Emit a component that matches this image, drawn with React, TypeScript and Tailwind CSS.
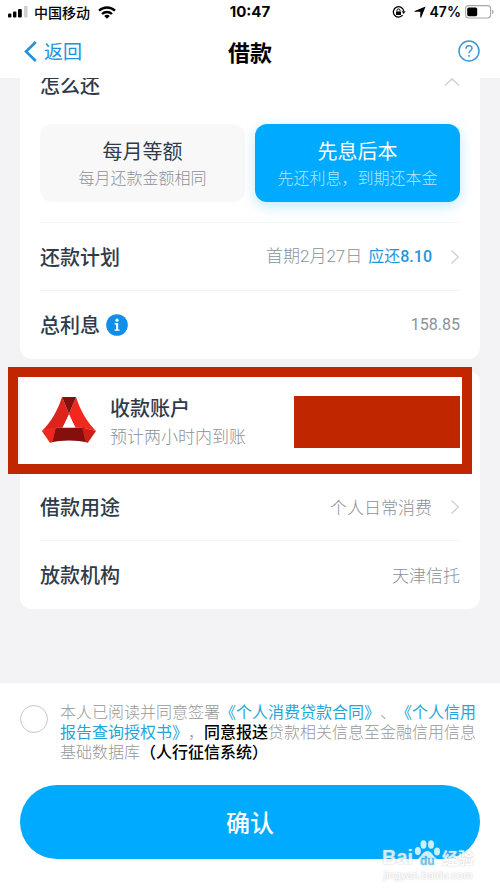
import React, { useState } from 'react';

interface Plan {
  key: string;
  title: string;
  desc: string;
}

interface RowProps {
  label: React.ReactNode;
  arrow?: boolean;
  line?: boolean;
  children: React.ReactNode;
}

const plans: Plan[] = [
  { key: 'equal', title: '每月等额', desc: '每月还款金额相同' },
  { key: 'interest', title: '先息后本', desc: '先还利息，到期还本金' },
];

const Chevron: React.FC<{ className?: string }> = ({ className }) => (
  <svg className={className} width="10" height="16" viewBox="0 0 10 16" fill="none" stroke="#d3d5d9" strokeWidth="1.6">
    <path d="M1.5 1.5 8.3 8l-6.8 6.5" />
  </svg>
);

const StatusBar: React.FC = () => (
  <div className="relative flex h-6 items-center justify-between pr-1.5 pl-2 text-black">
    <div className="flex items-center">
      <svg width="20" height="12" viewBox="0 0 20 12">
        <rect x="0" y="7.5" width="3.4" height="4" rx="1" />
        <rect x="5" y="5.5" width="3.4" height="6" rx="1" />
        <rect x="10" y="3" width="3.8" height="8.5" rx="1" />
        <rect x="16" y="0" width="3.6" height="11.5" rx="1" fill="#d0d0d0" />
      </svg>
      <span className="ml-1.5 text-sm font-medium">中国移动</span>
      <svg className="ml-2" width="18" height="13" viewBox="0 0 18 13" fill="none" stroke="#000" strokeWidth="2.3">
        <path d="M1 4.7a11.6 11.6 0 0 1 16 0" />
        <path d="M4 8a7.3 7.3 0 0 1 10 0" />
        <path d="M9 12.8 6.2 10a4 4 0 0 1 5.6 0z" fill="#000" stroke="none" />
      </svg>
    </div>
    <span className="absolute inset-x-0 text-center font-[Inter] text-[15px] font-bold">10:47</span>
    <div className="flex items-center">
      <svg width="14" height="12" viewBox="0 0 14 12" fill="none" stroke="#000" strokeWidth="1.3">
        <path d="M10.6 9.2A5.2 5.2 0 1 1 11.7 5" />
        <path d="M9.6 5.2h4l-2 2.8z" fill="#000" stroke="none" />
        <rect x="4" y="5.4" width="5" height="3.6" rx=".6" fill="#000" stroke="none" />
        <path d="M5 5.6V4.4a1.5 1.5 0 0 1 3 0v1.2" strokeWidth="1" />
      </svg>
      <svg className="ml-2" width="12" height="12" viewBox="0 0 12 12">
        <path d="M11.6.4 7.2 11.4c-.2.4-.9.3-.9-.1V5.7H.7C.3 5.7.2 5.2.6 5z" />
      </svg>
      <span className="ml-1 font-[Inter] text-sm font-semibold">47%</span>
      <svg className="ml-1" width="29" height="14" viewBox="0 0 29 14">
        <rect x=".6" y=".6" width="25" height="12.4" rx="3" fill="none" stroke="#a8a8a8" strokeWidth="1.1" />
        <rect x="2.2" y="2.4" width="10" height="8.8" rx="1.6" />
        <path d="M27 4.8v4.2c1-.3 1.5-1.1 1.5-2.1s-.5-1.8-1.5-2.1z" fill="#a8a8a8" />
      </svg>
    </div>
  </div>
);

const BankLogo: React.FC = () => (
  <svg className="mb-1 ml-0.5 shrink-0" width="54" height="46" viewBox="0 0 54 46">
    <path d="M20 0C16 13 9 25 0 34l14-3.5h7L27 17z" fill="#dc241b" />
    <path d="M34 0c4 13 11 25 20 34l-14-3.5h-7L27 17z" fill="#f2281e" />
    <path d="M20 0h14l-7 17z" fill="#850f0d" />
    <path d="M12 30.5h30l4 15c-12-2.8-26-2.8-38 0z" fill="#850f0d" />
    <path d="M0 34l13-3.5L9.5 45.2 8 45.500z" fill="#ee281e" />
    <path d="M0 34l13.500-3.500h.5L10.500 45 8 45.500z" fill="#ee281e" />
    <path d="M54 34l-13.500-3.500H40L43.500 45l2.500.5z" fill="#cc1f17" />
    <path d="M27 18l6.500 12.500h-13z" fill="#fff" />
  </svg>
);

const Row: React.FC<RowProps> = ({ label, arrow, line, children }) => (
  <div className={`flex h-[68px] items-center justify-between ${line ? 'border-b border-[#f3f5f7]' : ''}`}>
    <div className="flex items-center text-xl font-medium text-[#2f3b4a]">{label}</div>
    <div className="flex items-center text-[17px] font-light text-[#8c919a]">
      {children}
      {arrow && <Chevron className="ml-[18px]" />}
    </div>
  </div>
);

const Watermark: React.FC = () => (
  <div className="pointer-events-none absolute right-[26px] bottom-2 w-[92px] text-white opacity-80">
    <div className="flex items-end justify-between [text-shadow:0_0_2px_#b8b8b8]">
      <span className="font-['Liberation_Sans'] text-xl leading-6 font-bold">Bai</span>
      <svg width="27" height="30" viewBox="0 0 27 30" fill="#fff">
        <ellipse cx="3.8" cy="12" rx="3" ry="4" />
        <ellipse cx="9.5" cy="5.5" rx="3" ry="4.2" />
        <ellipse cx="17" cy="5.5" rx="3" ry="4.2" />
        <ellipse cx="23" cy="12.5" rx="3" ry="4" />
        <path d="M13.3 12c4 0 5 4 8 6.5 4 3.5 3 9.5-2 9.5-3 0-4-.6-6-.6s-3.500.6-6 .6c-5 0-6-6-2-9.500 3-2.500 4-6.500 8-6.500z" />
        <text x="13.3" y="25.5" textAnchor="middle" fontFamily="Liberation Sans" fontWeight="700" fontSize="12" fill="#45b8ee">du</text>
      </svg>
      <span className="text-base leading-6 font-bold">经验</span>
    </div>
    <div className="text-center font-['Liberation_Sans'] text-[11px] leading-3 [text-shadow:0_0_2px_#aaa]">jingyan.baidu.com</div>
  </div>
);

const App: React.FC = () => {
  const [plan, setPlan] = useState('interest');
  const [agreed, setAgreed] = useState(false);

  return (
    <div className="relative flex min-h-screen flex-col bg-[#f3f3f5] font-['Noto_Sans_CJK_SC',sans-serif] [text-spacing-trim:space-all]">
      <header className="bg-white">
        <StatusBar />
        <div className="relative flex h-[54px] items-center justify-between px-6">
          <button type="button" className="flex items-center text-[19px] text-[#2490dc]">
            <svg className="mr-[7px]" width="13" height="21" viewBox="0 0 13 21" fill="none" stroke="#2490dc" strokeWidth="2.6">
              <path d="M11.8 1 2 10.5l9.8 9.5" />
            </svg>
            返回
          </button>
          <h1 className="pointer-events-none absolute inset-x-0 text-center text-[22px] font-bold text-black">借款</h1>
          <button type="button" aria-label="帮助" className="-mr-1">
            <svg width="22" height="22" viewBox="0 0 22 22" fill="none" stroke="#3a98d6" strokeWidth="1.5">
              <circle cx="11" cy="11" r="10" />
              <path d="M8 8.7c0-4 6-4 6-.4 0 2.4-3 2.6-3 5" />
              <path d="M11 15v1.7" />
            </svg>
          </button>
        </div>
      </header>

      <main className="flex-1 overflow-hidden px-5">
        <section className="-mt-6 rounded-xl bg-white px-5">
          <div className="flex h-[62px] items-center justify-between">
            <h2 className="text-xl font-medium text-[#2f3b4a]">怎么还</h2>
            <svg className="mb-1.5" width="16" height="10" viewBox="0 0 16 10" fill="none" stroke="#d3d5d9" strokeWidth="1.6">
              <path d="M1 8.5 8 1.8l7 6.7" />
            </svg>
          </div>
          <div className="grid grid-cols-2 gap-2.5 border-b border-[#f3f5f7] pt-2 pb-5">
            {plans.map(item => (
              <button
                type="button"
                key={item.key}
                aria-pressed={plan === item.key}
                onClick={() => setPlan(item.key)}
                className={`flex h-[78px] flex-col items-center justify-center rounded-xl ${
                  plan === item.key
                    ? 'bg-[#00aaff] text-white shadow-[0_4px_14px_#00aaff40]'
                    : 'bg-[#f8f8f9] text-[#2f3b4a]'
                }`}
              >
                <span className="text-xl leading-7">{item.title}</span>
                <span className={`text-base leading-6 font-light ${plan === item.key ? 'text-[#b4e6ff]' : 'text-[#8c919a]'}`}>
                  {item.desc}
                </span>
              </button>
            ))}
          </div>
          <Row label="还款计划" arrow line>
            <span className="font-[Roboto,'Noto_Sans_CJK_SC',sans-serif]">首期2月27日</span>
            <span className="ml-1.5 font-[Roboto,'Noto_Sans_CJK_SC',sans-serif] text-base font-normal text-[#2196e0]">
              应还<span className="font-medium">8.10</span>
            </span>
          </Row>
          <Row
            label={
              <>
                总利息
                <svg className="ml-1.5" width="22" height="22" viewBox="0 0 22 22">
                  <circle cx="11" cy="11" r="10.8" fill="#108ee9" />
                  <circle cx="11" cy="6.2" r="1.6" fill="#fff" />
                  <path d="M8.6 9h3.6v6.4h1.4v1.4H8.6v-1.4H10v-5H8.6z" fill="#fff" />
                </svg>
              </>
            }
          >
            <span className="font-[Roboto,sans-serif] text-base font-normal">158.85</span>
          </Row>
        </section>

        <section className="relative mt-3 rounded-xl bg-white px-5">
          <div className="flex h-[102px] items-center justify-between">
            <div className="flex items-center">
              <BankLogo />
              <div className="ml-3.5">
                <div className="text-xl leading-7 font-medium text-[#2f3b4a]">收款账户</div>
                <div className="text-[17px] leading-7 font-light text-[#8c919a]">预计两小时内到账</div>
              </div>
            </div>
            <div className="h-[52px] w-[166px] bg-[#c02600]" />
          </div>
          <Row label="借款用途" arrow line>个人日常消费</Row>
          <Row label="放款机构">天津信托</Row>
          {/* highlight frame */}
          <div className="pointer-events-none absolute -top-1 right-2 -left-3 h-[107px] border-10 border-[#c02600]" />
        </section>
      </main>

      <footer className="bg-white px-5 pt-5 pb-[30px]">
        <div className="flex items-start">
          <input
            id="agree"
            type="checkbox"
            checked={agreed}
            onChange={e => setAgreed(e.target.checked)}
            className="mt-0.5 mr-3 size-7 shrink-0 appearance-none rounded-full border border-[#c8c8c8] checked:bg-[#00aaff]"
          />
          <label
            htmlFor="agree"
            className="font-['Liberation_Sans','Noto_Sans_CJK_SC',sans-serif] text-base leading-5 font-light text-[#989898]"
          >
            本人已阅读并同意签署<a href="#contract" className="font-normal text-[#25a5da]">《个人消费贷款合同》</a>、<a href="#credit" className="font-normal text-[#25a5da]">《个人信用报告查询授权书》</a>，<b className="font-medium text-black">同意报送</b>贷款相关信息至金融信用信息基础数据库<b className="font-medium text-black">（人行征信系统）</b>
          </label>
        </div>
        <button type="button" className="mt-[22px] h-[74px] w-full rounded-full bg-[#00aaff] text-2xl font-medium text-white">
          确认
        </button>
      </footer>
      <Watermark />
    </div>
  );
};

export default App;
